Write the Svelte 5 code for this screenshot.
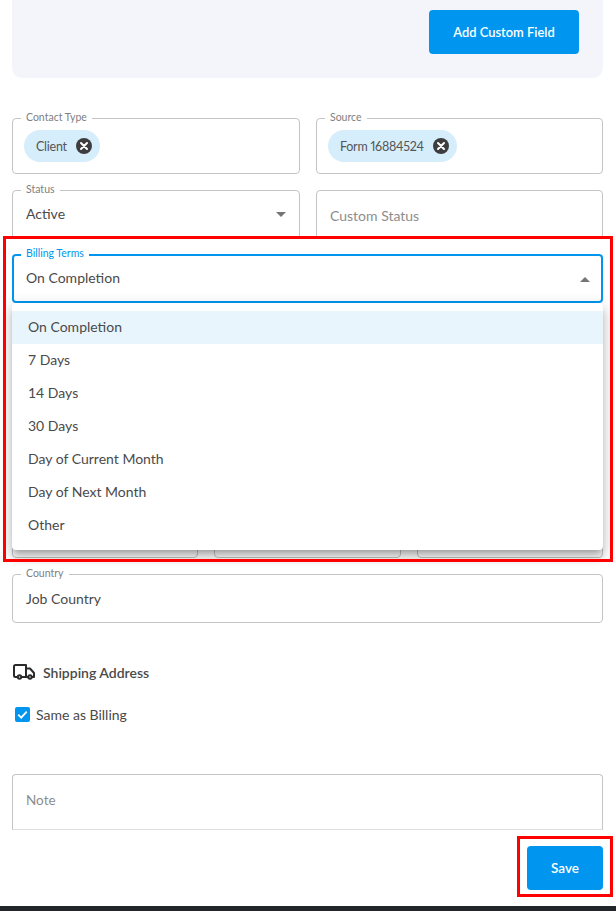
<script>
    // billing terms menu options
    const terms = ['On Completion', '7 Days', '14 Days', '30 Days', 'Day of Current Month', 'Day of Next Month', 'Other'];
    let billing = 'On Completion';
</script>

<main>
    <section class="custom-panel">
        <button class="btn add-btn">Add Custom Field</button>
    </section>

    <div class="row first-row">
        <div class="field chip-field">
            <span class="label">Contact Type</span>
            <span class="chip">Client
                <svg viewBox="0 0 16 16" width="16" height="16"><circle cx="8" cy="8" r="8" fill="#3d3d3f"/><path d="M5 5l6 6M11 5l-6 6" stroke="#fff" stroke-width="2" stroke-linecap="round"/></svg>
            </span>
        </div>
        <div class="field chip-field">
            <span class="label">Source</span>
            <span class="chip">Form 16884524
                <svg viewBox="0 0 16 16" width="16" height="16"><circle cx="8" cy="8" r="8" fill="#3d3d3f"/><path d="M5 5l6 6M11 5l-6 6" stroke="#fff" stroke-width="2" stroke-linecap="round"/></svg>
            </span>
        </div>
    </div>

    <div class="row second-row">
        <div class="field">
            <span class="label">Status</span>
            <span class="value raised">Active</span>
            <i class="caret"></i>
        </div>
        <div class="field custom-status">
            <span class="placeholder">Custom Status</span>
        </div>
    </div>

    <div class="billing">
        <div class="field focused">
            <span class="label">Billing Terms</span>
            <span class="value raised">{billing}</span>
            <i class="caret up"></i>
        </div>
        <ul class="menu">
            {#each terms as term}
                <li class:selected={term === billing}>{term}</li>
            {/each}
        </ul>
    </div>

    <div class="row-3">
        <div class="field"></div>
        <div class="field"></div>
        <div class="field"></div>
    </div>

    <div class="field country">
        <span class="label">Country</span>
        <span class="value">Job Country</span>
    </div>

    <h3 class="ship-title">
        <svg viewBox="0 0 22 16" width="22" height="16" fill="none" stroke="#2b2b2b" stroke-width="2" stroke-linejoin="round">
            <path d="M5 13H2.500A1.500 1.500 0 0 1 1 11.500V2.500A1.500 1.500 0 0 1 2.500 1H13v12H8"/>
            <path d="M13 4.500h4l4 4.500v4h-2.500M13 13h2.500"/>
            <circle cx="6.500" cy="13" r="1.700"/>
            <circle cx="17" cy="13" r="1.700"/>
        </svg>
        Shipping Address
    </h3>

    <label class="same">
        <svg viewBox="0 0 15 15" width="15" height="15"><rect width="15" height="15" rx="2" fill="#0096f0"/><path d="M3.200 7.700l3 3 5.500-6" fill="none" stroke="#fff" stroke-width="1.800"/></svg>
        Same as Billing
    </label>

    <div class="field note">
        <span class="placeholder">Note</span>
    </div>

    <div class="actions">
        <button class="btn save-btn">Save</button>
    </div>

    <footer class="bottom-bar"></footer>

    <!-- red annotation boxes from the screenshot -->
    <div class="mark mark-menu"></div>
    <div class="mark mark-save"></div>
</main>

<style>
    :global(body) {
        font-family: 'Lato', 'Liberation Sans', sans-serif;
        background: #fff;
        color: #4a4a4a;
    }

    main {
        position: relative;
        height: 911px;
        overflow: hidden;
        padding: 0 13px 0 12px;
        box-sizing: border-box;
    }

    .custom-panel {
        height: 78px;
        background: #f3f5fa;
        border-radius: 0 0 10px 10px;
        display: flex;
        justify-content: flex-end;
        align-items: flex-start;
        padding: 10px 24px 0 0;
        box-sizing: border-box;
    }

    .btn {
        background: #0096f0;
        color: #fff;
        border: none;
        border-radius: 4px;
        font-family: inherit;
        font-size: 13.500px;
        font-weight: 600;
        height: 44px;
    }

    .add-btn {
        width: 150px;
        font-size: 12.900px;
    }

    .row {
        display: grid;
        grid-template-columns: 288px 287px;
        gap: 16px;
    }

    .first-row {
        margin-top: 40px;
    }

    .second-row {
        margin-top: 16px;
    }

    .field {
        position: relative;
        display: flex;
        align-items: center;
        height: 49px;
        box-sizing: border-box;
        border: 1px solid #c4c4c4;
        border-radius: 4px;
        padding: 0 13px;
        font-size: 14px;
    }

    .chip-field {
        height: 56px;
        padding: 0 11px;
    }

    .custom-status {
        padding-top: 2px;
    }

    .label {
        position: absolute;
        top: -8px;
        left: 8px;
        padding: 0 5px;
        background: #fff;
        font-size: 10.500px;
        line-height: 13px;
        color: #808080;
    }

    .chip {
        display: flex;
        align-items: center;
        gap: 9px;
        height: 32px;
        padding: 0 8px 0 12px;
        border-radius: 16px;
        background: #d6edfc;
        font-size: 12.500px;
        letter-spacing: -0.25px;
        font-variant-numeric: proportional-nums;
        color: #555;
    }

    .value {
        color: #4a4a4a;
    }

    .value.raised {
        margin-top: -2px;
    }

    .placeholder {
        color: #8d8d8d;
    }

    .caret {
        position: absolute;
        right: 13px;
        top: 21px;
        width: 0;
        height: 0;
        border-left: 5px solid transparent;
        border-right: 5px solid transparent;
        border-top: 5px solid #757575;
    }

    .caret.up {
        right: 11px;
        border-top: none;
        border-bottom: 5px solid #757575;
    }

    .billing {
        position: relative;
        margin-top: 15px;
        z-index: 2;
    }

    .focused {
        border: 2px solid #0096f0;
        padding: 0 12px;
    }

    .focused .label {
        color: #0096f0;
        left: 7px;
        top: -9px;
    }

    .menu {
        position: absolute;
        top: 49px;
        left: 0;
        right: 0;
        height: 247px;
        margin: 0;
        padding: 8px 0;
        box-sizing: border-box;
        list-style: none;
        background: #fff;
        border-radius: 4px;
        box-shadow: 0 5px 5px -3px rgba(0, 0, 0, 0.2), 0 8px 10px 1px rgba(0, 0, 0, 0.14), 0 3px 14px 2px rgba(0, 0, 0, 0.12);
    }

    .menu li {
        height: 33px;
        line-height: 32px;
        padding: 0 16px;
        font-size: 14px;
        color: #4a4a4a;
    }

    .menu li.selected {
        background: #e8f5fd;
    }

    .row-3 {
        display: grid;
        grid-template-columns: 186px 187px 186px;
        gap: 16px;
        margin-top: 206px;
    }

    .country {
        margin-top: 16px;
    }

    .ship-title {
        display: flex;
        align-items: center;
        gap: 8px;
        margin: 41px 0 0 1px;
        height: 16px;
        font-size: 14px;
        font-weight: 600;
        color: #4a4a4a;
    }

    .same {
        display: flex;
        align-items: center;
        gap: 6px;
        margin: 27px 0 0 3px;
        height: 15px;
        font-size: 14px;
    }

    .note {
        margin-top: 52px;
        height: 56px;
        padding-bottom: 4px;
        font-size: 13.500px;
        border-color: #c4c4c4 #c4c4c4 #e0e0e0;
        border-radius: 4px 4px 0 0;
    }

    .actions {
        display: flex;
        justify-content: flex-end;
        margin-top: 16px;
    }

    .save-btn {
        width: 76px;
    }

    .bottom-bar {
        position: absolute;
        left: 0;
        right: 0;
        bottom: 0;
        height: 5px;
        background: #22262b;
    }

    .mark {
        position: absolute;
        border: 3px solid #f00;
        box-sizing: border-box;
        z-index: 3;
    }

    .mark-menu {
        left: 3px;
        top: 236px;
        width: 610px;
        height: 326px;
    }

    .mark-save {
        left: 517px;
        top: 836px;
        width: 96px;
        height: 61px;
    }
</style>
